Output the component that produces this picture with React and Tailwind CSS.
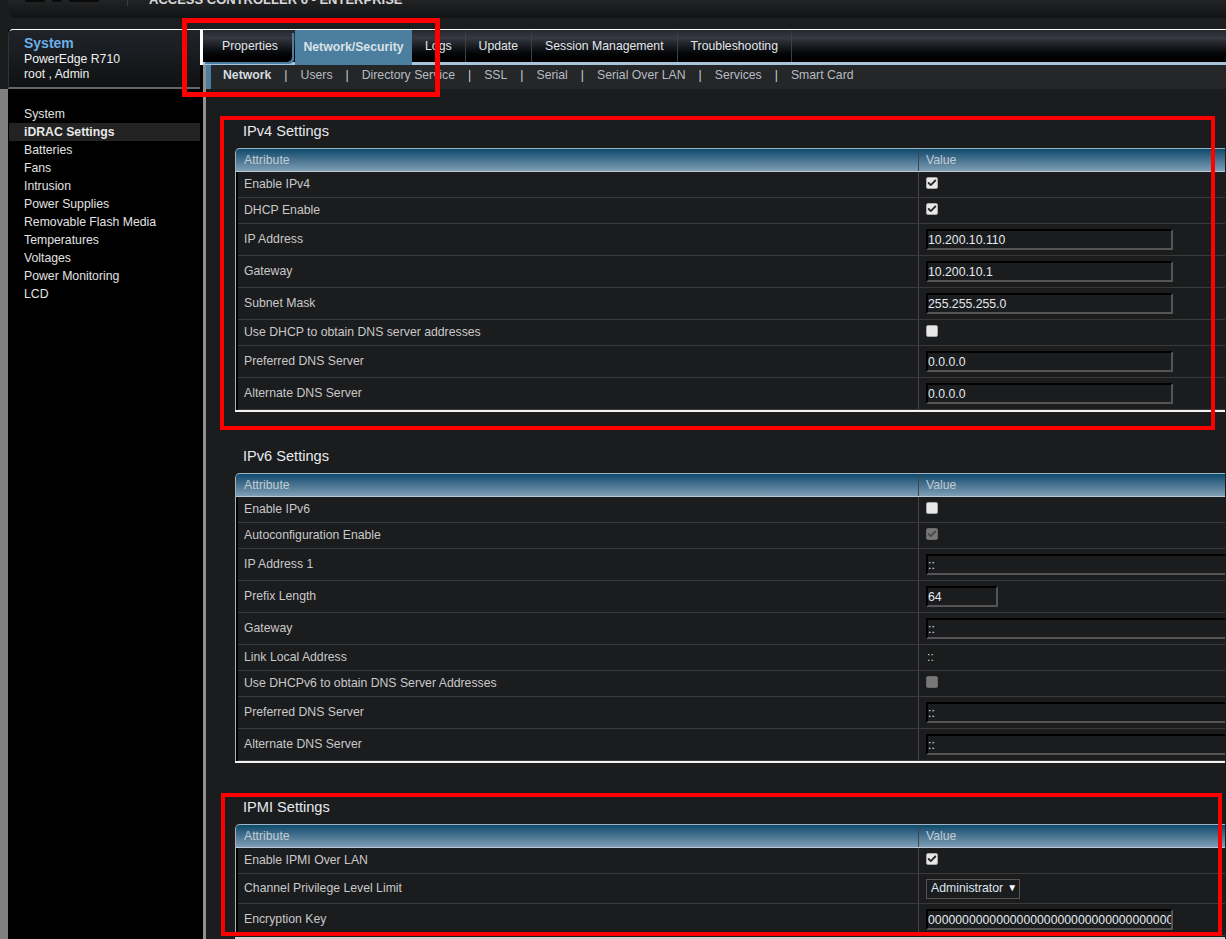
import { Check } from "lucide-react";

const sideItems = [
  "System",
  "iDRAC Settings",
  "Batteries",
  "Fans",
  "Intrusion",
  "Power Supplies",
  "Removable Flash Media",
  "Temperatures",
  "Voltages",
  "Power Monitoring",
  "LCD",
];

const tabs = ["Logs", "Update", "Session Management", "Troubleshooting"];
const subTabs = ["Users", "Directory Service", "SSL", "Serial", "Serial Over LAN", "Services", "Smart Card"];

const ipv4 = [
  { label: "Enable IPv4", type: "check", checked: true },
  { label: "DHCP Enable", type: "check", checked: true },
  { label: "IP Address", type: "input", value: "10.200.10.110" },
  { label: "Gateway", type: "input", value: "10.200.10.1" },
  { label: "Subnet Mask", type: "input", value: "255.255.255.0" },
  { label: "Use DHCP to obtain DNS server addresses", type: "check" },
  { label: "Preferred DNS Server", type: "input", value: "0.0.0.0" },
  { label: "Alternate DNS Server", type: "input", value: "0.0.0.0" },
];

const ipv6 = [
  { label: "Enable IPv6", type: "check" },
  { label: "Autoconfiguration Enable", type: "check", checked: true, disabled: true },
  { label: "IP Address 1", type: "wide", value: "::" },
  { label: "Prefix Length", type: "short", value: "64" },
  { label: "Gateway", type: "wide", value: "::" },
  { label: "Link Local Address", type: "text", value: "::" },
  { label: "Use DHCPv6 to obtain DNS Server Addresses", type: "check", disabled: true },
  { label: "Preferred DNS Server", type: "wide", value: "::" },
  { label: "Alternate DNS Server", type: "wide", value: "::" },
];

const ipmi = [
  { label: "Enable IPMI Over LAN", type: "check", checked: true },
  { label: "Channel Privilege Level Limit", type: "select", value: "Administrator" },
  { label: "Encryption Key", type: "input", value: "0000000000000000000000000000000000000000" },
];

const inputClass =
  "block h-[21px] shrink-0 border-2 border-t-black border-l-black border-r-[#555] border-b-[#555] bg-transparent px-0 text-[12.25px] text-[#e4ebf0] outline-none";

const Box = ({ checked, disabled }) => (
  <div
    className={`-mt-[3px] flex h-3 w-3 items-center justify-center rounded-[2px] border ${
      disabled ? "border-[#6a6a6a] bg-[#777]" : "border-[#a8a8a8] bg-[#e8e8e8]"
    }`}
  >
    {checked && (
      <Check
        size={10}
        strokeWidth={4.5}
        className={disabled ? "shrink-0 text-[#4a4a4a]" : "shrink-0 text-[#2c2c2c]"}
      />
    )}
  </div>
);

const Value = ({ row }) => {
  if (row.type === "check") return <Box checked={row.checked} disabled={row.disabled} />;
  if (row.type === "input")
    return <input readOnly defaultValue={row.value} className={`${inputClass} w-[247px]`} />;
  if (row.type === "wide")
    return <input readOnly defaultValue={row.value} className={`${inputClass} w-[400px]`} />;
  if (row.type === "short")
    return <input readOnly defaultValue={row.value} className={`${inputClass} w-[72px]`} />;
  if (row.type === "select")
    return (
      <div className="flex h-[20px] w-[94px] items-center border border-[#555] pl-1 text-[12.25px] text-[#dfe6ec]">
        {row.value}
        <span className="ml-[4px] mt-[-3px] text-[10px] text-white">▼</span>
      </div>
    );
  return <span className="ml-px text-[12.25px] text-[#d8d8d8]">{row.value}</span>;
};

const Section = ({ title, rows, className }) => (
  <section className={className}>
    <h2 className="ml-[8px] mb-[7px] h-[20px] text-[14.6px] leading-[20px] text-[#e6eaee]">{title}</h2>
    <div className="w-[990px] rounded-tl-[5px] border-l border-[#aab0b4]">
      <div className="flex h-6 items-center rounded-tl-[4px] border-t border-b border-t-[#9fb4c2] border-b-[#b9cad6] bg-linear-to-b from-[#074a6c] to-[#7f9fb6] text-[12.25px] text-[#c3ccd3]">
        <div className="w-[682px] pl-2">Attribute</div>
        <div className="flex h-full flex-1 items-center border-l border-[#444] pl-[7px]">Value</div>
      </div>
      <div className="border-l-2 border-black">
        {rows.map((row) => (
          <Row key={row.label} row={row} />
        ))}
      </div>
      {rows.length !== 3 && <div className="-ml-px h-[2px] bg-[#f2f2f2]"></div>}
    </div>
  </section>
);

const Row = ({ row }) => {
  const tall = row.type !== "check" && row.type !== "text";
  const height = row.type === "select" ? "h-[30px]" : tall ? "h-8" : "h-[26px]";
  return (
    <div className={`flex ${height} items-center border-b border-[#3a3a3a] text-[12.25px] text-[#c9c9c9]`}>
      <div className="w-[680px] pl-[6px]">{row.label}</div>
      <div className="flex h-full flex-1 items-center overflow-hidden border-l border-[#444] pl-[7px]">
        <Value row={row} />
      </div>
    </div>
  );
};

const Marker = ({ className }) => (
  <div className={`pointer-events-none absolute border-[#ff0000] ${className}`}></div>
);

export default function App() {
  return (
    <div className="relative flex h-[939px] w-[1226px] flex-col overflow-hidden bg-[#1b1c1e] font-['Liberation_Sans',Arial,sans-serif]">
      <header className="ml-2 flex h-[18px] items-start overflow-hidden rounded-bl-lg bg-linear-to-b from-[#222325] to-[#111314]">
        <div className="ml-[17px] flex h-[2px] w-[80px] gap-[7px]">
          <span className="h-full w-5 rounded-b-sm bg-[#0a0a0a]"></span>
          <span className="h-full w-[10px] rounded-b-sm bg-[#0a0a0a]"></span>
          <span className="h-full w-[30px] rounded-b-sm bg-[#0a0a0a]"></span>
        </div>
        <div className="ml-[22px] h-[6px] w-px bg-[#3c3c3c]"></div>
        <div className="ml-[21px] mt-[-10px] whitespace-nowrap text-[13px] font-bold text-[#d8d8d8]">
          ACCESS CONTROLLER 6 - ENTERPRISE
        </div>
      </header>

      <div className="h-[11px] ml-2 bg-[#1c1d1f]"></div>

      <div className="flex flex-1 overflow-hidden">
        <div className="flex w-2 flex-col">
          <div className="h-[60px]"></div>
          <div className="flex-1 bg-[#808080]"></div>
        </div>

        <aside className="flex w-[192px] flex-col bg-black">
          <div className="h-[60px] rounded-tl-[5px] border-t border-b-2 border-l border-t-white border-b-[#666] border-l-[#333] bg-linear-to-b from-[#20242a] to-[#101112] pl-[15px] pt-[5px] text-[12.25px] leading-[15px] text-[#f0f0f0]">
            <div className="text-[14px] font-bold leading-[17px] text-[#6cb0e6]">System</div>
            <div>PowerEdge R710</div>
            <div>root , Admin</div>
          </div>
          <ul className="pl-px pt-[16px] text-[12.25px] leading-[18px] text-[#e2e2e2]">
            {sideItems.map((item) => (
              <li
                key={item}
                className={`h-[18px] pl-[15px] ${
                  item === "iDRAC Settings" ? "bg-[#232323] font-bold text-[#e8e8e8]" : ""
                }`}
              >
                {item}
              </li>
            ))}
          </ul>
        </aside>

        <div className="flex w-[3px] flex-col bg-black">
          <div className="h-[36px] bg-white"></div>
        </div>

        <main className="flex flex-1 flex-col bg-[#1b1c1e]">
          <nav className="flex h-[36px] border-t border-white bg-[#1b1c1e]">
            <div className="flex flex-1 border-b-[3px] border-[#a8c4da] bg-linear-to-b from-[#25272b] via-[#363942] via-25% to-black pt-px">
              <div className="flex h-full w-[89px] items-center rounded-br-[5px] rounded-tl-[5px] pl-[19px] text-[12.25px] text-[#e0e6ea] shadow-[2px_2px_0_#4b7e9f]">
                Properties
              </div>
              <div className="ml-[3px] mb-[-3px] mt-[-1px] flex w-[117px] items-center justify-center bg-[#4b7e9f] text-[12.25px] font-bold text-[#d9e2e8]">
                Network/Security
              </div>
              {tabs.map((tab) => (
                <div
                  key={tab}
                  className="flex h-full items-center border-r border-[#3c3e44] px-[13px] text-[12.25px] text-[#e0e6ea] first:pl-[17px]"
                >
                  {tab}
                </div>
              ))}
            </div>
          </nav>

          <div className="flex flex-1 flex-col overflow-hidden border-l-[3px] border-[#8f8f8f]">
            <div className="flex h-[24px] items-center border-l-[5px] border-[#4b7e9f] bg-[#252628] pb-[4px] pl-3 text-[12.25px] text-[#b5bcc2]">
              <span className="font-bold text-[#d5dbe0]">Network</span>
              {subTabs.map((tab) => (
                <span key={tab} className="flex items-center">
                  <span className="mx-[13px] text-[#c8ced4]">|</span>
                  {tab}
                </span>
              ))}
            </div>

            <div className="pl-[29px] pt-[32px]">
              <Section title="IPv4 Settings" rows={ipv4} />
              <Section title="IPv6 Settings" rows={ipv6} className="mt-[34px]" />
              <Section title="IPMI Settings" rows={ipmi} className="mt-[34px]" />
              <div className="mt-px h-[2px] w-[990px] bg-[#cfcfcf]"></div>
            </div>
          </div>
        </main>
      </div>

      <Marker className="left-[182px] top-[18px] h-[79px] w-[258px] border-[5px]" />
      <Marker className="left-[220px] top-[116px] h-[314px] w-[995px] border-4" />
      <Marker className="left-[221px] top-[793px] h-[143px] w-[1001px] border-4" />
    </div>
  );
}
